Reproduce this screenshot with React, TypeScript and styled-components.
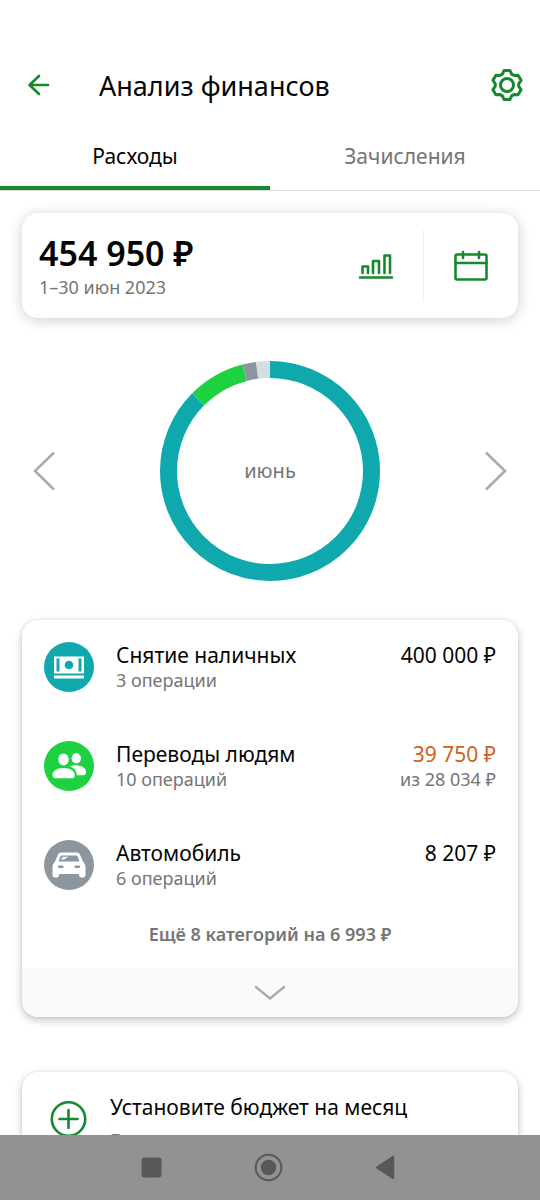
import React from "react";
import styled, { createGlobalStyle } from "styled-components";

const GREEN = "#16892f";
const GREY = "#757575";

const GlobalStyle = createGlobalStyle`
  *, *::before, *::after { box-sizing: border-box; }
  body {
    margin: 0;
    background: #fff;
    color: #050505;
    font-family: "Noto Sans", "Open Sans", sans-serif;
  }
  button {
    font: inherit;
    color: inherit;
    background: none;
    border: 0;
    padding: 0;
    cursor: pointer;
  }
  svg { display: block; }
`;

const Screen = styled.div`
  height: 100vh;
  display: flex;
  flex-direction: column;
`;

const Content = styled.main`
  flex: 1;
  min-height: 0;
  overflow-y: auto;
  scrollbar-width: none;
`;

const Header = styled.header`
  display: flex;
  align-items: center;
  padding: 61px 16px 0 24px;
`;

const IconButton = styled.button`
  display: flex;
  align-items: center;
  justify-content: center;
  flex: none;
`;

const Title = styled.h1`
  flex: 1;
  margin: 0 0 0 45px;
  padding-top: 2px;
  font-size: 27px;
  line-height: 46px;
  font-weight: 400;
`;

const Tabs = styled.div`
  display: flex;
  margin-top: 13px;
  border-bottom: 1px solid #dcdcdc;
`;

const Tab = styled.button<{ $active?: boolean }>`
  flex: 1;
  height: 68px;
  padding-top: 4px;
  font-size: 21px;
  line-height: 28px;
  color: ${(p) => (p.$active ? "#050505" : GREY)};
  border-bottom: 4px solid ${(p) => (p.$active ? GREEN : "transparent")};
`;

const Card = styled.section`
  margin: 0 22px;
  border-radius: 16px;
  background: #fff;
  overflow: hidden;
  box-shadow: 0 3px 8px rgba(0, 0, 0, 0.24), 0 0 3px rgba(0, 0, 0, 0.08);
`;

const SummaryCard = styled(Card)`
  display: flex;
  align-items: center;
  margin-top: 22px;
  padding: 17px 0 16px 17px;
  box-shadow: 0 2px 14px rgba(0, 0, 0, 0.2);
`;

const Summary = styled.div`
  flex: 1;
`;

const Total = styled.div`
  font-size: 34px;
  line-height: 46px;
  font-weight: 600;
`;

const Period = styled.div`
  font-size: 18px;
  line-height: 22px;
  padding-bottom: 4px;
  color: ${GREY};
`;

const SummaryAction = styled(IconButton)`
  width: 95px;
  height: 72px;

  & + & { border-left: 1px solid #f0f0f0; }
`;

const ChartArea = styled.section`
  display: flex;
  align-items: center;
  justify-content: space-between;
  padding: 43px 32px 39px;
`;

const Donut = styled.div`
  display: grid;
  place-items: center;

  & > * { grid-area: 1 / 1; }
`;

const Month = styled.span`
  font-size: 20px;
  line-height: 28px;
  color: ${GREY};
`;

const CategoryList = styled.ul`
  list-style: none;
  margin: 0;
  padding: 0;
`;

const Category = styled.li`
  display: flex;
  height: 99px;
  padding: 22px 22px 0;
`;

const Badge = styled.span<{ $color: string }>`
  display: flex;
  align-items: center;
  justify-content: center;
  flex: none;
  width: 50px;
  height: 50px;
  margin-right: 22px;
  border-radius: 50%;
  background: ${(p) => p.$color};
`;

const Texts = styled.div<{ $end?: boolean }>`
  flex: ${(p) => (p.$end ? "none" : 1)};
  text-align: ${(p) => (p.$end ? "right" : "left")};
`;

const Primary = styled.div<{ $alert?: boolean }>`
  font-size: 21px;
  line-height: 27px;
  color: ${(p) => (p.$alert ? "#d3601c" : "#050505")};
`;

const Secondary = styled.div`
  font-size: 18px;
  line-height: 23px;
  color: ${GREY};
`;

const More = styled.button`
  display: block;
  width: 100%;
  height: 51px;
  padding-bottom: 18px;
  font-size: 18px;
  line-height: 32px;
  font-weight: 600;
  color: ${GREY};
`;

const Expand = styled(IconButton)`
  width: 100%;
  height: 49px;
  background: #fafafa;
`;

const BudgetCard = styled(Card)`
  display: flex;
  margin-top: 55px;
  margin-bottom: 24px;
  padding: 22px 28px;
`;

const BudgetTexts = styled.div`
  margin-left: 23px;
`;

const BudgetHint = styled(Secondary)`
  margin-top: 8px;
`;

const SystemBar = styled.nav`
  flex: none;
  display: flex;
  align-items: center;
  justify-content: center;
  gap: 88px;
  height: 65px;
  padding-right: 4px;
  background: #929292;
`;

const SystemButton = styled(IconButton)`
  width: 29px;
  height: 29px;
`;

const TOOTH: [number, number][] = [
  [-4.6, -10.9],
  [-3.0, -14.5],
  [3.0, -14.5],
  [4.6, -10.9],
];

const gearPath =
  [0, 60, 120, 180, 240, 300]
    .flatMap((deg) => {
      const a = (deg * Math.PI) / 180;
      return TOOTH.map(([x, y]) => [
        (x * Math.cos(a) - y * Math.sin(a)).toFixed(2),
        (x * Math.sin(a) + y * Math.cos(a)).toFixed(2),
      ]);
    })
    .map(([x, y], i) => `${i ? "L" : "M"}${x} ${y}`)
    .join("") + "Z";

const GearIcon = () => (
  <svg width="34" height="34" viewBox="-17 -17 34 34" fill="none" stroke={GREEN} strokeWidth="3" strokeLinejoin="round">
    <path d={gearPath} />
    <circle r="6.5" />
  </svg>
);

const BackIcon = () => (
  <svg width="30" height="30" viewBox="0 0 30 30" fill="none" stroke={GREEN} strokeWidth="2.6" strokeLinecap="round" strokeLinejoin="round">
    <path d="M15 6 5.500 15 15 24M5.500 15H24" />
  </svg>
);

const BarsIcon = () => (
  <svg width="36" height="32" viewBox="0 0 36 32" fill="none" stroke={GREEN} strokeWidth="2.6" strokeLinecap="round" strokeLinejoin="round">
    <path d="M2 27.500H34M4.500 23V16.500H10V23M15 23V11H21V23M26.500 23V5.500H32V23" />
  </svg>
);

const CalendarIcon = () => (
  <svg width="36" height="32" viewBox="0 0 36 32" fill="none" stroke={GREEN} strokeWidth="2.6" strokeLinecap="round" strokeLinejoin="round">
    <rect x="2.500" y="4.500" width="31" height="25" rx="1.500" />
    <path d="M2.500 13H33.500M10 2V8M26 2V8" />
  </svg>
);

const SideArrow = ({ right }: { right?: boolean }) => (
  <svg width="24" height="40" viewBox="0 0 24 40" fill="none" stroke="#ababab" strokeWidth="2.6">
    <path d={right ? "M2 1.500 21 20 2 38.500" : "M22 1.500 3 20 22 38.500"} />
  </svg>
);

const DownArrow = () => (
  <svg width="34" height="18" viewBox="0 0 34 18" fill="none" stroke="#ababab" strokeWidth="2.4" strokeLinecap="round" strokeLinejoin="round">
    <path d="M3 3 17 14.500 31 3" />
  </svg>
);

const CashIcon = () => (
  <svg width="32" height="26" viewBox="0 0 32 26">
    <path fill="#fff" d="M1 2.500H31V19.500H1Z" />
    <path fill="#0fa8ad" d="M3.500 4.500H6.500V17.500H3.500ZM25.500 4.500H28.500V17.500H25.500Z" />
    <circle cx="16" cy="11" r="4.300" fill="#0fa8ad" />
    <path fill="#fff" d="M1 21.500H31V24.500H1Z" />
  </svg>
);

const PeopleIcon = () => (
  <svg width="36" height="28" viewBox="0 0 36 28" fill="#fff">
    <ellipse cx="12.500" cy="7.500" rx="5.200" ry="5.900" />
    <ellipse cx="25.300" cy="6.300" rx="4.700" ry="5.100" />
    <path d="M12.500 16C6 16 1.500 18.800 1.500 22.800C1.500 25 2.600 26.300 4.500 26.300H21C22.800 26.300 23.800 25 23.800 23.200C23.800 18.800 19 16 12.500 16Z" />
    <path d="M19 14.600C21 13.600 23.300 13.100 25.500 13.300C31 13.600 35 16.200 35 20C35 22.200 33.800 23.200 32 23.200H25.800C25.800 18.800 22.500 15.800 19 14.600Z" />
  </svg>
);

const CarIcon = () => (
  <svg width="36" height="28" viewBox="0 0 36 28">
    <path fill="#fff" d="M10.500 1.500H25.500C27.300 1.500 28.400 2.300 29 3.800L32 10.500C33.500 12 34.500 13.800 34.500 16V24C34.500 25.500 33.700 26.500 32.300 26.500H30.300C28.800 26.500 28 25.500 28 24V23H8V24C8 25.500 7.200 26.500 5.700 26.500H3.700C2.300 26.500 1.500 25.500 1.500 24V16C1.500 13.800 2.500 12 4 10.500L7 3.800C7.600 2.300 8.700 1.500 10.500 1.500Z" />
    <path fill="#8c969f" d="M11 4.500H25C25.800 4.500 26.300 4.800 26.600 5.500L28.500 10.500H7.500L9.400 5.500C9.700 4.800 10.200 4.500 11 4.500Z" />
    <path fill="#fff" d="M10 8.500 12 5.800H17.500L13 8.500Z" />
    <rect x="7" y="14.500" width="5.500" height="2.600" rx="1.200" fill="#8c969f" />
    <rect x="23.500" y="14.500" width="5.500" height="2.600" rx="1.200" fill="#8c969f" />
  </svg>
);

const PlusIcon = () => (
  <svg width="37" height="48" viewBox="0 0 37 48" fill="none" stroke={GREEN} strokeWidth="2.6" strokeLinecap="round">
    <circle cx="18.500" cy="25" r="16.700" />
    <path d="M18.500 16V34M9.500 25H27.500" />
  </svg>
);

const segments = [
  { color: "#0fa8ad", from: 0, to: 315 },
  { color: "#1dd140", from: 315, to: 345.6 },
  { color: "#8c969f", from: 345.6, to: 352.8 },
  { color: "#d2dde5", from: 352.8, to: 360 },
];

const categories = [
  { name: "Снятие наличных", count: "3 операции", amount: "400 000 ₽", color: "#0fa8ad", icon: <CashIcon /> },
  { name: "Переводы людям", count: "10 операций", amount: "39 750 ₽", limit: "из 28 034 ₽", color: "#1dd140", icon: <PeopleIcon /> },
  { name: "Автомобиль", count: "6 операций", amount: "8 207 ₽", color: "#8c969f", icon: <CarIcon /> },
];

export default function App() {
  return (
    <>
      <GlobalStyle />
      <Screen>
        <Content>
          <Header>
            <IconButton aria-label="Назад"><BackIcon /></IconButton>
            <Title>Анализ финансов</Title>
            <IconButton aria-label="Настройки"><GearIcon /></IconButton>
          </Header>
          <Tabs role="tablist">
            <Tab role="tab" aria-selected="true" $active>Расходы</Tab>
            <Tab role="tab" aria-selected="false">Зачисления</Tab>
          </Tabs>

          <SummaryCard>
            <Summary>
              <Total>454 950 ₽</Total>
              <Period>1–30 июн 2023</Period>
            </Summary>
            <SummaryAction aria-label="Статистика"><BarsIcon /></SummaryAction>
            <SummaryAction aria-label="Выбрать период"><CalendarIcon /></SummaryAction>
          </SummaryCard>

          <ChartArea>
            <IconButton aria-label="Предыдущий месяц"><SideArrow /></IconButton>
            <Donut>
              <svg width="220" height="220" viewBox="-110 -110 220 220" fill="none" strokeWidth="17">
                {segments.map((s) => (
                  <circle
                    key={s.from}
                    r="101.500"
                    stroke={s.color}
                    pathLength={360}
                    strokeDasharray={`${s.to - s.from} 360`}
                    transform={`rotate(${s.from - 90})`}
                  />
                ))}
              </svg>
              <Month>июнь</Month>
            </Donut>
            <IconButton aria-label="Следующий месяц"><SideArrow right /></IconButton>
          </ChartArea>

          <Card>
            <CategoryList>
              {categories.map((c) => (
                <Category key={c.name}>
                  <Badge $color={c.color}>{c.icon}</Badge>
                  <Texts>
                    <Primary>{c.name}</Primary>
                    <Secondary>{c.count}</Secondary>
                  </Texts>
                  <Texts $end>
                    <Primary $alert={Boolean(c.limit)}>{c.amount}</Primary>
                    {c.limit && <Secondary>{c.limit}</Secondary>}
                  </Texts>
                </Category>
              ))}
            </CategoryList>
            <More>Ещё 8 категорий на 6 993 ₽</More>
            <Expand aria-label="Показать все категории"><DownArrow /></Expand>
          </Card>

          <BudgetCard>
            <PlusIcon />
            <BudgetTexts>
              <Primary>Установите бюджет на месяц</Primary>
              <BudgetHint>Б</BudgetHint>
            </BudgetTexts>
          </BudgetCard>
        </Content>

        <SystemBar aria-label="Системная навигация">
          <SystemButton aria-label="Недавние">
            <svg width="29" height="29" viewBox="0 0 29 29"><rect x="4.500" y="4.500" width="20" height="20" rx="3" fill="#585858" /></svg>
          </SystemButton>
          <SystemButton aria-label="Домой">
            <svg width="29" height="29" viewBox="0 0 29 29">
              <circle cx="14.500" cy="14.500" r="12.800" fill="none" stroke="#585858" strokeWidth="2" />
              <circle cx="14.500" cy="14.500" r="7.800" fill="#585858" />
            </svg>
          </SystemButton>
          <SystemButton aria-label="Назад">
            <svg width="29" height="29" viewBox="0 0 29 29"><path d="M5.500 14.500 22.500 3.500V25.500Z" fill="#585858" stroke="#585858" strokeWidth="1.500" strokeLinejoin="round" /></svg>
          </SystemButton>
        </SystemBar>
      </Screen>
    </>
  );
}
